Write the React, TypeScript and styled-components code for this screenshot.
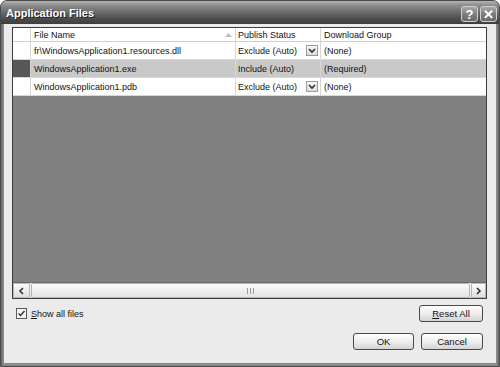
import React from "react";
import styled, { createGlobalStyle } from "styled-components";

const Global = createGlobalStyle`
  html, body { margin: 0; padding: 0; background: #ffffff; }
  body { font-family: "Liberation Sans", Arial, sans-serif; }
  * { box-sizing: border-box; }
`;

const Window = styled.div`
  width: 500px;
  height: 367px;
  display: flex;
  flex-direction: column;
  border: 1px solid #4a4a4a;
  border-radius: 7px 7px 0 0;
  overflow: hidden;
  background: linear-gradient(90deg, #5e5e5e 0px, #8a8a8a 2px, #8a8a8a calc(100% - 2px), #5e5e5e 100%);
`;

const TitleBar = styled.div`
  height: 23px;
  flex: none;
  display: flex;
  align-items: center;
  justify-content: space-between;
  padding: 0 2px 0 5px;
  background: linear-gradient(#b4b4b4 0%, #8e8e8e 18%, #6a6a6a 50%, #4a4a4a 80%, #3e3e3e 100%);
`;

const Title = styled.span`
  color: #ffffff;
  font-weight: bold;
  font-size: 11px;
  text-shadow: 1px 1px 0 #202020;
  margin-top: 1px;
`;

const Caps = styled.div`
  display: flex;
  gap: 2px;
  margin-top: 3px;
`;

const CapButton = styled.div`
  width: 17px;
  height: 16px;
  border: 1px solid #d0d0d0;
  border-radius: 3px;
  background: linear-gradient(#a8a8a8, #7c7c7c 55%, #6a6a6a);
  color: #ffffff;
  font-weight: bold;
  font-size: 13px;
  display: flex;
  align-items: center;
  justify-content: center;
  line-height: 1;
`;

const Body = styled.div`
  flex: 1;
  margin: 0 3px 3px 3px;
  background: #ebebeb;
  display: flex;
  flex-direction: column;
  padding: 3px 9px 0 8px;
`;

const Grid = styled.div`
  height: 272px;
  border: 1px solid #3c3c3c;
  display: flex;
  flex-direction: column;
  background: #808080;
`;

const Row = styled.div<{ $header?: boolean; $selected?: boolean }>`
  display: grid;
  grid-template-columns: 18px 205px 85px 1fr;
  height: ${(p) => (p.$header ? 14 : 18)}px;
  background: ${(p) => (p.$selected ? "#c9c9c9" : "#ffffff")};
  border-bottom: 1px solid ${(p) => (p.$header ? "#cfcfcf" : "#d8d8d8")};
  font-size: 9px;
  color: #111111;
`;

const Cell = styled.div<{ $pad?: number }>`
  display: flex;
  align-items: center;
  padding-left: ${(p) => p.$pad ?? 3}px;
  border-right: 1px solid #d6d6d6;
  white-space: nowrap;
  overflow: hidden;
  &:last-child { border-right: none; }
`;

const RowHead = styled.div<{ $active?: boolean }>`
  border-right: 1px solid #d6d6d6;
  background: ${(p) => (p.$active ? "#575757" : "#ffffff")};
`;

const SortArrow = styled.svg`
  margin-left: auto;
  margin-right: 3px;
`;

const Drop = styled.div`
  width: 12px;
  height: 11px;
  margin-left: auto;
  margin-right: 2px;
  border: 1px solid #9a9a9a;
  background: linear-gradient(#f6f6f6, #dcdcdc);
  display: flex;
  align-items: center;
  justify-content: center;
`;

const Empty = styled.div`
  flex: 1;
`;

const HScroll = styled.div`
  height: 16px;
  display: flex;
  background: linear-gradient(#f7f7f7, #e2e2e2);
  border-top: 1px solid #6a6a6a;
`;

const ScrollBtn = styled.div<{ $w: number }>`
  width: ${(p) => p.$w}px;
  display: flex;
  align-items: center;
  justify-content: center;
  background: linear-gradient(#fafafa, #dedede);
  border: 1px solid #b8b8b8;
`;

const Thumb = styled.div`
  flex: 1;
  margin: 0 1px;
  border: 1px solid #b4b4b4;
  border-radius: 2px;
  background: linear-gradient(#fbfbfb, #e4e4e4);
  display: flex;
  align-items: center;
  justify-content: center;
`;

const Grip = styled.div`
  width: 7px;
  height: 6px;
  background: repeating-linear-gradient(90deg, #9a9a9a 0 1px, transparent 1px 3px);
`;

const OptionsRow = styled.div`
  display: flex;
  align-items: center;
  justify-content: space-between;
  margin-top: 6px;
  padding: 0 4px 0 4px;
  height: 17px;
`;

const CheckLabel = styled.label`
  display: flex;
  align-items: center;
  gap: 4px;
  font-size: 9px;
  color: #111111;
`;

const Box = styled.span`
  width: 11px;
  height: 11px;
  border: 1px solid #5a5a5a;
  background: #f4f4f4;
  display: flex;
  align-items: center;
  justify-content: center;
`;

const ActionRow = styled.div`
  display: flex;
  justify-content: flex-end;
  gap: 7px;
  margin-top: 11px;
  padding-right: 4px;
`;

const Button = styled.div<{ $w: number }>`
  width: ${(p) => p.$w}px;
  height: 17px;
  border: 1px solid #4a4a4a;
  border-radius: 3px;
  background: linear-gradient(#ffffff, #ececec 55%, #d4d4d4);
  font-size: 9.5px;
  color: #111111;
  display: flex;
  align-items: center;
  justify-content: center;
`;

const U = styled.span`
  text-decoration: underline;
`;

const Chevron = ({ dir }: { dir: "left" | "right" | "down" }) => {
  const pts =
    dir === "left" ? "5,1 2,4 5,7" : dir === "right" ? "2,1 5,4 2,7" : "1,2 4,5 7,2";
  return (
    <svg width="8" height="8" viewBox="0 0 8 8">
      <polyline points={pts} fill="none" stroke="#333" strokeWidth="1.6" />
    </svg>
  );
};

const rows = [
  { name: "fr\\WindowsApplication1.resources.dll", status: "Exclude (Auto)", drop: true, group: "(None)" },
  { name: "WindowsApplication1.exe", status: "Include (Auto)", drop: false, group: "(Required)", selected: true },
  { name: "WindowsApplication1.pdb", status: "Exclude (Auto)", drop: true, group: "(None)" },
];

export default function App() {
  return (
    <>
      <Global />
      <Window>
        <TitleBar>
          <Title>Application Files</Title>
          <Caps>
            <CapButton>?</CapButton>
            <CapButton>✕</CapButton>
          </Caps>
        </TitleBar>
        <Body>
          <Grid>
            <Row $header>
              <RowHead />
              <Cell>
                File Name
                <SortArrow width="7" height="4" viewBox="0 0 7 4">
                  <polygon points="0,4 3.5,0 7,4" fill="#bdbdbd" />
                </SortArrow>
              </Cell>
              <Cell $pad={2}>Publish Status</Cell>
              <Cell $pad={3}>Download Group</Cell>
            </Row>
            {rows.map((r) => (
              <Row key={r.name} $selected={r.selected}>
                <RowHead $active={r.selected} />
                <Cell>{r.name}</Cell>
                <Cell $pad={2}>
                  {r.status}
                  {r.drop && (
                    <Drop>
                      <Chevron dir="down" />
                    </Drop>
                  )}
                </Cell>
                <Cell $pad={3}>{r.group}</Cell>
              </Row>
            ))}
            <Empty />
            <HScroll>
              <ScrollBtn $w={17}>
                <Chevron dir="left" />
              </ScrollBtn>
              <Thumb>
                <Grip />
              </Thumb>
              <ScrollBtn $w={15}>
                <Chevron dir="right" />
              </ScrollBtn>
            </HScroll>
          </Grid>
          <OptionsRow>
            <CheckLabel>
              <Box>
                <svg width="9" height="9" viewBox="0 0 9 9">
                  <polyline points="1.5,4.5 3.5,6.5 7.5,2" fill="none" stroke="#333" strokeWidth="1.4" />
                </svg>
              </Box>
              <span>
                <U>S</U>how all files
              </span>
            </CheckLabel>
            <Button $w={64}>
              <span>
                <U>R</U>eset All
              </span>
            </Button>
          </OptionsRow>
          <ActionRow>
            <Button $w={61}>OK</Button>
            <Button $w={62}>Cancel</Button>
          </ActionRow>
        </Body>
      </Window>
    </>
  );
}
